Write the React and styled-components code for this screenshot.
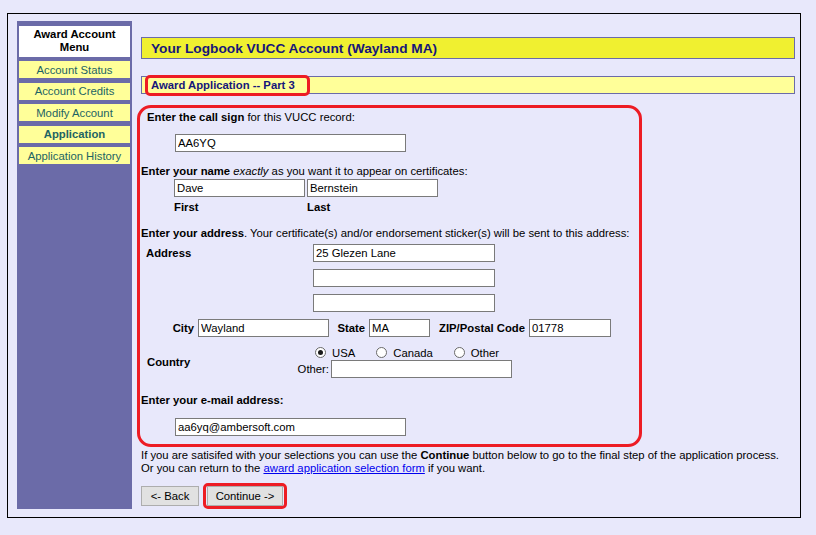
import React from "react";
import styled, { createGlobalStyle } from "styled-components";

const GlobalStyle = createGlobalStyle`
  body {
    margin: 0;
    background: #e8e8fb;
    font-family: "Liberation Sans", Arial, sans-serif;
    font-size: 11.3px;
    color: #000;
  }
`;

const Page = styled.div`
  padding: 13px 0 0 7px;
`;

const Frame = styled.div`
  width: 794px;
  box-sizing: border-box;
  border: 1px solid #000;
  display: flex;
  gap: 9px;
  padding: 7px 5px 8px 9px;
`;

const Sidebar = styled.nav`
  width: 115px;
  flex: none;
  box-sizing: border-box;
  background: #6b6ba8;
  padding: 5px 2px;
  display: flex;
  flex-direction: column;
  gap: 4.5px;
`;

const MenuHeader = styled.div`
  height: 30.5px;
  background: #fff;
  display: flex;
  align-items: center;
  justify-content: center;
  text-align: center;
  font-weight: bold;
  line-height: 13px;
`;

const MenuItem = styled.div`
  height: 17px;
  background: #ffff99;
  color: #1d6464;
  font-weight: ${(p) => (p.$active ? "bold" : "normal")};
  display: flex;
  align-items: center;
  justify-content: center;
`;

const Main = styled.main`
  width: 654px;
  flex: none;
  padding-top: 16px;
`;

const TitleBar = styled.div`
  height: 22px;
  box-sizing: border-box;
  border: 1px solid #6b6ba8;
  background: #f0f030;
  color: #16167a;
  font-size: 13.7px;
  font-weight: bold;
  padding-left: 9px;
  display: flex;
  align-items: center;
`;

const SubBar = styled.div`
  margin-top: 17px;
  height: 18px;
  box-sizing: border-box;
  border: 1px solid #6b6ba8;
  background: #ffff99;
  padding-left: 3px;
  display: flex;
  align-items: center;
`;

const Marked = styled.span`
  flex: none;
  height: 21px;
  box-sizing: border-box;
  border: 3px solid #ed1c24;
  border-radius: 5px;
  padding: 0 12px 0 3px;
  color: #16167a;
  font-weight: bold;
  display: flex;
  align-items: center;
`;

const FormBox = styled.div`
  margin: 11px 0 0 -4px;
  width: 505px;
  box-sizing: border-box;
  border: 3px solid #ed1c24;
  border-radius: 14px;
  padding: 2px 0 8px 1px;
`;

const Prompt = styled.div`
  line-height: 14px;
  white-space: nowrap;
  margin-top: ${(p) => p.$top || 0}px;
  margin-left: ${(p) => p.$indent || 0}px;
`;

const Field = styled.input`
  display: block;
  width: ${(p) => p.$w}px;
  height: 18px;
  box-sizing: border-box;
  margin: ${(p) => p.$top || 0}px 0 0 ${(p) => p.$indent || 0}px;
  border: 1px solid #7a7a7a;
  background: #fff;
  padding: 0 2px;
  font-family: "Liberation Sans", Arial, sans-serif;
  font-size: 11.3px;
  color: #000;
  outline: none;
`;

const Pair = styled.div`
  display: grid;
  grid-template-columns: 131px 131px;
  column-gap: 2px;
  padding-left: 33px;
  margin-top: ${(p) => p.$top || 0}px;
  line-height: 14px;
`;

const Caption = styled.span`
  font-weight: bold;
`;

const AddressGrid = styled.div`
  margin-top: 4.5px;
  display: grid;
  grid-template-columns: 172px 182px;
  row-gap: 7px;
`;

const SideLabel = styled.div`
  grid-column: 1;
  grid-row: ${(p) => p.$row || 1};
  align-self: center;
  padding-left: ${(p) => p.$pad}px;
  font-weight: bold;
  line-height: 14px;
`;

const CityRow = styled.div`
  margin-top: 7px;
  display: grid;
  grid-template-columns: 53px 131px 32px 61px 91px 82px;
  column-gap: 4px;
  align-items: center;
`;

const RightLabel = styled.span`
  text-align: right;
  font-weight: ${(p) => (p.$plain ? "normal" : "bold")};
  white-space: nowrap;
  ${(p) => p.$w && `width: ${p.$w}px;`}
`;

const CountryGrid = styled.div`
  margin-top: 8.5px;
  display: grid;
  grid-template-columns: 155px auto;
`;

const Choices = styled.div`
  grid-column: 2;
  display: flex;
  flex-direction: column;
`;

const RadioRow = styled.div`
  display: flex;
  align-items: center;
  gap: 21px;
  height: 14px;
  padding-left: 19px;
`;

const Option = styled.label`
  display: flex;
  align-items: center;
  gap: 6px;
`;

const Radio = styled.span`
  width: 11px;
  height: 11px;
  box-sizing: border-box;
  border: 1px solid #6a6a6a;
  border-radius: 50%;
  background: #fff;
  display: flex;
  align-items: center;
  justify-content: center;
  &::after {
    content: "";
    width: 5px;
    height: 5px;
    border-radius: 50%;
    background: ${(p) => (p.$on ? "#1a1a1a" : "transparent")};
  }
`;

const OtherRow = styled.div`
  margin-top: 0.5px;
  display: flex;
  align-items: center;
  gap: 2px;
`;

const Note = styled.p`
  margin: 1.5px 0 0;
  line-height: 13px;
  white-space: nowrap;
`;

const Link = styled.a`
  color: #0000ee;
  text-decoration: underline;
`;

const Buttons = styled.div`
  margin-top: 8.5px;
  display: flex;
  align-items: center;
  gap: 4px;
`;

const Button = styled.button`
  width: ${(p) => p.$w}px;
  height: 20px;
  box-sizing: border-box;
  border: 1px solid #adadad;
  background: #e1e1e1;
  padding: 0;
  font-family: "Liberation Sans", Arial, sans-serif;
  font-size: 11.3px;
  color: #000;
`;

const Ring = styled.span`
  display: flex;
  border: 3px solid #ed1c24;
  border-radius: 5px;
  padding: 0 1px;
`;

const menu = [
  { label: "Account Status" },
  { label: "Account Credits" },
  { label: "Modify Account" },
  { label: "Application", active: true },
  { label: "Application History" },
];

export default function App() {
  return (
    <Page>
      <GlobalStyle />
      <Frame>
        <Sidebar>
          <MenuHeader>
            Award Account
            <br />
            Menu
          </MenuHeader>
          {menu.map((m) => (
            <MenuItem key={m.label} $active={m.active}>
              {m.label}
            </MenuItem>
          ))}
        </Sidebar>

        <Main>
          <TitleBar>Your Logbook VUCC Account (Wayland MA)</TitleBar>
          <SubBar>
            <Marked>Award Application -- Part 3</Marked>
          </SubBar>

          <FormBox>
            <Prompt $indent={6}>
              <b>Enter the call sign</b> for this VUCC record:
            </Prompt>
            <Field $w={231} $top={10} $indent={34} value="AA6YQ" readOnly />

            <Prompt $top={12}>
              <b>Enter your name</b> <i>exactly</i> as you want it to appear on
              certificates:
            </Prompt>
            <Pair $top={1}>
              <Field $w={131} value="Dave" readOnly />
              <Field $w={131} value="Bernstein" readOnly />
            </Pair>
            <Pair $top={2.5}>
              <Caption>First</Caption>
              <Caption>Last</Caption>
            </Pair>

            <Prompt $top={12}>
              <b>Enter your address</b>. Your certificate(s) and/or endorsement
              sticker(s) will be sent to this address:
            </Prompt>
            <AddressGrid>
              <SideLabel $pad={5}>Address</SideLabel>
              <Field $w={182} style={{ gridColumn: 2 }} value="25 Glezen Lane" readOnly />
              <Field $w={182} style={{ gridColumn: 2 }} value="" readOnly />
              <Field $w={182} style={{ gridColumn: 2 }} value="" readOnly />
            </AddressGrid>
            <CityRow>
              <RightLabel>City</RightLabel>
              <Field $w={131} value="Wayland" readOnly />
              <RightLabel>State</RightLabel>
              <Field $w={61} value="MA" readOnly />
              <RightLabel>ZIP/Postal Code</RightLabel>
              <Field $w={82} value="01778" readOnly />
            </CityRow>

            <CountryGrid>
              <SideLabel $pad={6}>Country</SideLabel>
              <Choices>
                <RadioRow>
                  <Option>
                    <Radio $on /> USA
                  </Option>
                  <Option>
                    <Radio /> Canada
                  </Option>
                  <Option>
                    <Radio /> Other
                  </Option>
                </RadioRow>
                <OtherRow>
                  <RightLabel $plain $w={33}>Other:</RightLabel>
                  <Field $w={181} value="" readOnly />
                </OtherRow>
              </Choices>
            </CountryGrid>

            <Prompt $top={15}>
              <b>Enter your e-mail address:</b>
            </Prompt>
            <Field $w={231} $top={11} $indent={34} value="aa6yq@ambersoft.com" readOnly />
          </FormBox>

          <Note>
            If you are satisifed with your selections you can use the <b>Continue</b>{" "}
            button below to go to the final step of the application process.
            <br />
            Or you can return to the <Link href="#">award application selection form</Link>{" "}
            if you want.
          </Note>

          <Buttons>
            <Button $w={58}>&lt;- Back</Button>
            <Ring>
              <Button $w={76}>Continue -&gt;</Button>
            </Ring>
          </Buttons>
        </Main>
      </Frame>
    </Page>
  );
}
